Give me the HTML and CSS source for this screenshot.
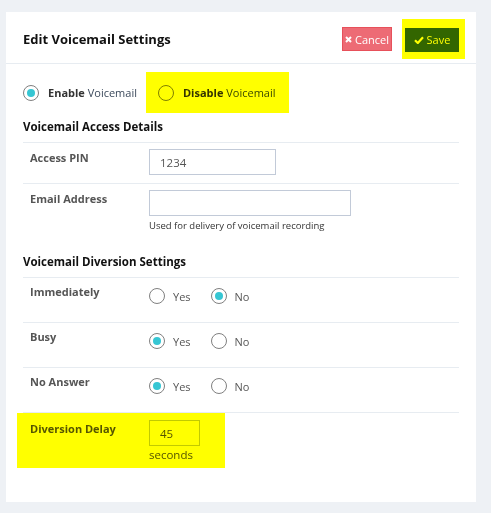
FILE: index.html
```html
<!DOCTYPE html>
<html lang="en">

<head>
    <meta charset="UTF-8">
    <meta name="viewport" content="width=device-width, initial-scale=1.0">
    <title>Edit Voicemail Settings</title>
    <link rel="stylesheet" href="styles.css">
</head>

<body>
    <div class="card">
        <div class="cardHead">
            <h3 class="title">Edit Voicemail Settings</h3>
            <div class="actions">
                <button class="btn btnCancel">
                    <svg width="7" height="7" viewBox="0 0 7 7"><path d="M1 1L6 6M6 1L1 6" stroke="#fff" stroke-width="2"/></svg>
                    Cancel
                </button>
                <div class="hl hlSave">
                    <button class="btn btnSave">
                        <svg width="10" height="8" viewBox="0 0 10 8"><path d="M1 4.2L3.8 7L9 1.2" fill="none" stroke="#fff" stroke-width="2.2"/></svg>
                        Save
                    </button>
                </div>
            </div>
        </div>

        <div class="cardBody">
            <div class="modeRow">
                <label class="opt"><span class="radio on"></span><span><b>Enable</b> Voicemail</span></label>
                <div class="hl hlMode">
                    <label class="opt"><span class="radio"></span><span><b>Disable</b> Voicemail</span></label>
                </div>
            </div>

            <h4 class="section">Voicemail Access Details</h4>
            <div class="row">
                <div class="lbl">Access PIN</div>
                <div class="field"><input class="inp inpPin" type="text" value="1234"></div>
            </div>
            <div class="row noline">
                <div class="lbl">Email Address</div>
                <div class="field">
                    <input class="inp inpMail" type="text" value="">
                    <div class="help">Used for delivery of voicemail recording</div>
                </div>
            </div>

            <h4 class="section">Voicemail Diversion Settings</h4>
            <div class="row tall">
                <div class="lbl">Immediately</div>
                <div class="field choices">
                    <label class="opt"><span class="radio"></span>Yes</label>
                    <label class="opt"><span class="radio on"></span>No</label>
                </div>
            </div>
            <div class="row tall">
                <div class="lbl">Busy</div>
                <div class="field choices">
                    <label class="opt"><span class="radio on"></span>Yes</label>
                    <label class="opt"><span class="radio"></span>No</label>
                </div>
            </div>
            <div class="row tall">
                <div class="lbl">No Answer</div>
                <div class="field choices">
                    <label class="opt"><span class="radio on"></span>Yes</label>
                    <label class="opt"><span class="radio"></span>No</label>
                </div>
            </div>
            <div class="delayRow">
                <div class="hl hlDelay">
                    <div class="lbl">Diversion Delay</div>
                    <div class="field">
                        <input class="inp inpDelay" type="text" value="45">
                        <div class="unit">seconds</div>
                    </div>
                </div>
            </div>
        </div>
    </div>
</body>

</html>
```

FILE: styles.css
```css
body {
    margin: 0;
    padding: 12px 15px 0 6px;
    background: #eef1f5;
    font-family: "Open Sans", "Liberation Sans", sans-serif;
    font-size: 11px;
    line-height: 15px;
    color: #555;
}

.card {
    background: #fff;
    height: 490px;
}

.cardHead {
    box-sizing: border-box;
    height: 52px;
    padding: 3px 17px 0;
    border-bottom: 1px solid #e7ecf1;
    display: flex;
    align-items: center;
    justify-content: space-between;
}

.title {
    margin: 0;
    font-size: 13px;
    font-weight: bold;
    color: #111;
}

.actions {
    display: flex;
    align-items: center;
    gap: 10px;
    margin-right: -6px;
}

.btn {
    height: 24px;
    border: 1px solid transparent;
    font-family: inherit;
    font-size: 11px;
    padding: 0;
    color: #fff;
    white-space: nowrap;
    display: flex;
    align-items: center;
    justify-content: center;
    gap: 3px;
}

.btnCancel {
    width: 50px;
    background: #ed6b75;
    border-color: #e7505a;
}

.btnSave {
    width: 54px;
    background: #336633;
    border-color: #336633;
}

/* yellow marker boxes */
.hl {
    background: #ffff00;
}

.hl > * {
    mix-blend-mode: multiply;
}

.hlSave {
    padding: 9px 6px 7px 3px;
    margin-top: -1px;
}

.cardBody {
    padding: 8px 17px 0 17px;
}

.modeRow {
    display: flex;
    align-items: center;
    height: 41px;
    gap: 9px;
}

.hlMode {
    height: 41px;
    padding: 0 13px 0 12px;
    display: flex;
    align-items: center;
}

.hlMode .opt {
    background: #fff;
}

.opt {
    display: flex;
    align-items: center;
    gap: 9px;
}

.opt b {
    color: #333;
}

.modeRow .opt {
    color: #3c4a5c;
}

.radio {
    width: 16px;
    height: 16px;
    box-sizing: border-box;
    border: 1.5px solid #808080;
    border-radius: 50%;
    display: flex;
    align-items: center;
    justify-content: center;
    background: #fff;
}

.radio.on::after {
    content: "";
    width: 8px;
    height: 8px;
    border-radius: 50%;
    background: #36c6d3;
}

.section {
    margin: 0;
    padding: 6px 0 7px;
    font-size: 11.5px;
    line-height: 16px;
    font-weight: bold;
    color: #111;
    border-bottom: 1px solid #e7ecf1;
}

.row {
    box-sizing: border-box;
    display: grid;
    grid-template-columns: 119px 1fr;
    height: 41px;
    padding: 6px 0 0 7px;
    border-bottom: 1px solid #e7ecf1;
}

.row.noline {
    height: 64px;
    border-bottom: none;
}

.lbl {
    font-weight: bold;
    padding-top: 1px;
}

.inp {
    box-sizing: border-box;
    height: 26px;
    border: 1px solid #c2cad8;
    padding: 0 10px;
    font-family: inherit;
    font-size: 11.5px;
    color: #555;
    outline: none;
    background: #fff;
}

.inpPin {
    width: 127px;
}

.inpMail {
    width: 202px;
    display: block;
}

.help {
    font-size: 9.5px;
    line-height: 13px;
    color: #333;
    margin-top: 3px;
}

.row.tall {
    height: 45px;
    padding: 6px 0 0 7px;
}

.tall .lbl {
    padding-top: 0;
}

.choices {
    display: flex;
    gap: 20px;
    padding-top: 4px;
    align-items: flex-start;
}

.choices .opt {
    gap: 8px;
}

.hlDelay {
    display: grid;
    grid-template-columns: 119px auto;
    width: 208px;
    box-sizing: border-box;
    margin-left: -6px;
    padding: 7px 0 6px 13px;
}

.hlDelay .lbl,
.hlDelay .field {
    background: #fff;
}

.inpDelay {
    width: 51px;
    display: block;
}

.unit {
    margin-top: 1px;
    font-size: 11.5px;
}
```
